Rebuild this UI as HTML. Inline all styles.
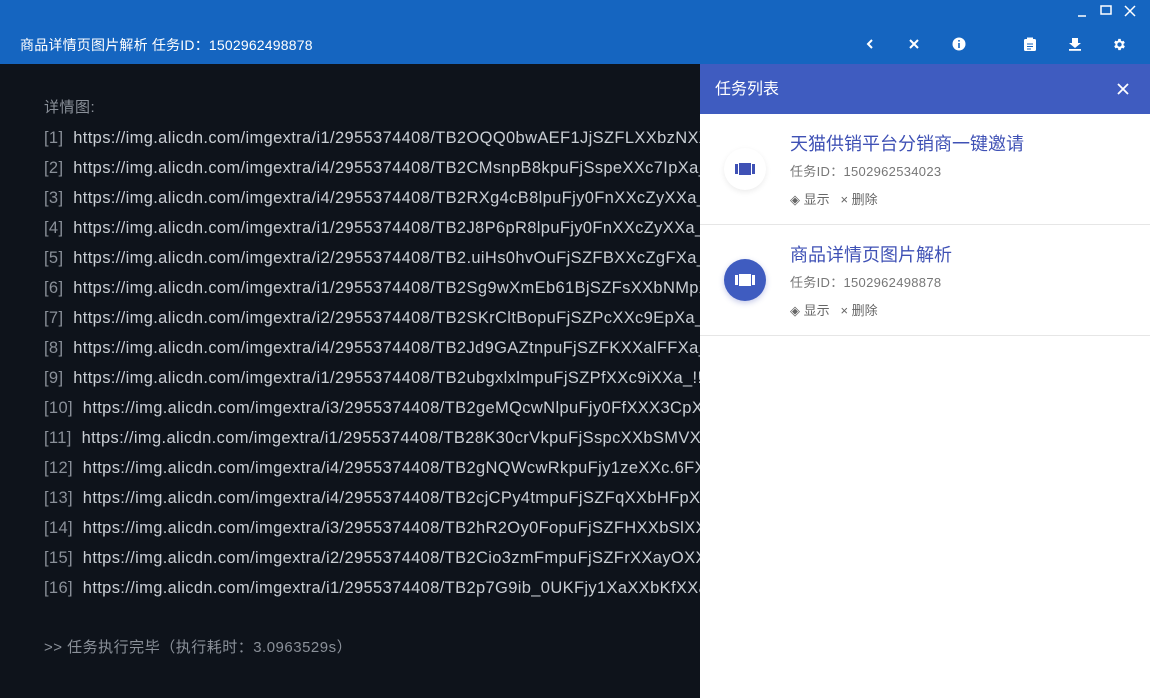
<!DOCTYPE html>
<html><head><meta charset="utf-8"><style>
*{margin:0;padding:0;box-sizing:border-box}
body{width:1150px;height:698px;overflow:hidden;background:#0e131b;font-family:"Liberation Sans","Noto Sans CJK SC",sans-serif;position:relative}
.top{position:absolute;left:0;top:0;width:1150px;height:64px;background:#1565c0}
.title{position:absolute;left:20px;top:35px;color:#fff;font-size:14px;letter-spacing:0.2px}
.ic{position:absolute;color:#fff}
.log{position:absolute;left:44px;top:98px;width:656px;overflow:hidden;white-space:nowrap;color:#c9ced4;font-size:16.5px;letter-spacing:0.35px}
.log div{height:30px;line-height:20px}
.log .n{color:#8a9099}
.log .h{color:#8a9099;font-size:15px;letter-spacing:0.5px}
.panel{position:absolute;left:700px;top:64px;width:450px;height:634px;background:#fff}
.ph{height:50px;background:#3f5cc0;color:#fff;font-size:16px;line-height:52px;padding-left:15px;position:relative}
.item{height:111px;border-bottom:1px solid #e6e6e6;position:relative}
.av{position:absolute;left:24px;top:34px;width:42px;height:42px;border-radius:50%}
.it{position:absolute;left:90px;top:16px;font-size:18px;color:#3f51b5}
.id{position:absolute;left:90px;top:47px;font-size:13px;color:#777;letter-spacing:0.3px}
.ac{position:absolute;left:90px;top:75px;font-size:13px;color:#666}
</style></head><body>
<div class="top">
<div class="title">商品详情页图片解析 任务ID：1502962498878</div>
<svg class="ic" style="left:1076px;top:6px" width="12" height="12"><path d="M2 10h8" stroke="#fff" stroke-width="1.5"/></svg>
<svg class="ic" style="left:1100px;top:5px" width="12" height="12"><rect x="1" y="1" width="10" height="8" fill="none" stroke="#fff" stroke-width="1.5"/></svg>
<svg class="ic" style="left:1124px;top:5px" width="12" height="12"><path d="M1 1l10 10M11 1L1 11" stroke="#fff" stroke-width="1.5"/></svg>
<svg class="ic" style="left:864px;top:38px" width="12" height="12"><path d="M8 2L4 6l4 4" stroke="#fff" stroke-width="2" fill="none"/></svg>
<svg class="ic" style="left:908px;top:38px" width="12" height="12"><path d="M2 2l8 8M10 2l-8 8" stroke="#fff" stroke-width="2"/></svg>
<svg class="ic" style="left:952px;top:37px" width="14" height="14"><circle cx="7" cy="7" r="6.5" fill="#fff"/><rect x="6.2" y="6" width="1.6" height="5" fill="#1565c0"/><rect x="6.2" y="3" width="1.6" height="1.6" fill="#1565c0"/></svg>
<svg class="ic" style="left:1023px;top:37px" width="14" height="15"><rect x="1" y="2" width="12" height="12" rx="1.5" fill="#fff"/><rect x="4" y="0.5" width="6" height="3" fill="#fff"/><path d="M4 7h6M4 9.5h6M4 12h4" stroke="#1565c0" stroke-width="1"/></svg>
<svg class="ic" style="left:1068px;top:37px" width="14" height="14"><path d="M4 1h6v5h3L7 11 1 6h3z" fill="#fff"/><rect x="1" y="12" width="12" height="1.8" fill="#fff"/></svg>
<svg class="ic" style="left:1112px;top:37px" width="15" height="15" viewBox="0 0 24 24"><path fill="#fff" d="M19.4 13a7.5 7.5 0 000-2l2.1-1.6-2-3.5-2.5 1a7 7 0 00-1.7-1L15 3h-4l-.4 2.7a7 7 0 00-1.7 1l-2.5-1-2 3.5L6.6 11a7.5 7.5 0 000 2l-2.1 1.6 2 3.5 2.5-1a7 7 0 001.7 1L11 21h4l.4-2.7a7 7 0 001.7-1l2.5 1 2-3.5zM13 15.5a3.5 3.5 0 110-7 3.5 3.5 0 010 7z" transform="translate(-1 0)"/></svg>
</div>
<div class="log">
<div class="h">详情图:</div>
<div><span class="n">[1]</span>&nbsp; https://img.alicdn.com/imgextra/i1/2955374408/TB2OQQ0bwAEF1JjSZFLXXbzNXXa_!!2955374408.jpg</div>
<div><span class="n">[2]</span>&nbsp; https://img.alicdn.com/imgextra/i4/2955374408/TB2CMsnpB8kpuFjSspeXXc7IpXa_!!2955374408.jpg</div>
<div><span class="n">[3]</span>&nbsp; https://img.alicdn.com/imgextra/i4/2955374408/TB2RXg4cB8lpuFjy0FnXXcZyXXa_!!2955374408.jpg</div>
<div><span class="n">[4]</span>&nbsp; https://img.alicdn.com/imgextra/i1/2955374408/TB2J8P6pR8lpuFjy0FnXXcZyXXa_!!2955374408.jpg</div>
<div><span class="n">[5]</span>&nbsp; https://img.alicdn.com/imgextra/i2/2955374408/TB2.uiHs0hvOuFjSZFBXXcZgFXa_!!2955374408.jpg</div>
<div><span class="n">[6]</span>&nbsp; https://img.alicdn.com/imgextra/i1/2955374408/TB2Sg9wXmEb61BjSZFsXXbNMpXa_!!2955374408.jpg</div>
<div><span class="n">[7]</span>&nbsp; https://img.alicdn.com/imgextra/i2/2955374408/TB2SKrCltBopuFjSZPcXXc9EpXa_!!2955374408.jpg</div>
<div><span class="n">[8]</span>&nbsp; https://img.alicdn.com/imgextra/i4/2955374408/TB2Jd9GAZtnpuFjSZFKXXalFFXa_!!2955374408.jpg</div>
<div><span class="n">[9]</span>&nbsp; https://img.alicdn.com/imgextra/i1/2955374408/TB2ubgxlxlmpuFjSZPfXXc9iXXa_!!2955374408.jpg</div>
<div><span class="n">[10]</span>&nbsp; https://img.alicdn.com/imgextra/i3/2955374408/TB2geMQcwNlpuFjy0FfXXX3CpXa_!!2955374408.jpg</div>
<div><span class="n">[11]</span>&nbsp; https://img.alicdn.com/imgextra/i1/2955374408/TB28K30crVkpuFjSspcXXbSMVXa_!!2955374408.jpg</div>
<div><span class="n">[12]</span>&nbsp; https://img.alicdn.com/imgextra/i4/2955374408/TB2gNQWcwRkpuFjy1zeXXc.6FXa_!!2955374408.jpg</div>
<div><span class="n">[13]</span>&nbsp; https://img.alicdn.com/imgextra/i4/2955374408/TB2cjCPy4tmpuFjSZFqXXbHFpXa_!!2955374408.jpg</div>
<div><span class="n">[14]</span>&nbsp; https://img.alicdn.com/imgextra/i3/2955374408/TB2hR2Oy0FopuFjSZFHXXbSlXXa_!!2955374408.jpg</div>
<div><span class="n">[15]</span>&nbsp; https://img.alicdn.com/imgextra/i2/2955374408/TB2Cio3zmFmpuFjSZFrXXayOXXa_!!2955374408.jpg</div>
<div><span class="n">[16]</span>&nbsp; https://img.alicdn.com/imgextra/i1/2955374408/TB2p7G9ib_0UKFjy1XaXXbKfXXa_!!2955374408.jpg</div>
<div></div>
<div class="h">&gt;&gt; 任务执行完毕（执行耗时：3.0963529s）</div>
</div>
<div class="panel">
<div class="ph">任务列表<svg style="position:absolute;left:417px;top:19px" width="12" height="12"><path d="M1 1l10 10M11 1L1 11" stroke="#fff" stroke-width="1.8"/></svg></div>
<div class="item">
<div class="av" style="background:#fff;box-shadow:0 2px 6px rgba(0,0,0,.08)"><svg width="42" height="42"><rect x="11" y="16" width="3" height="10" fill="#3f51b5"/><rect x="15" y="15" width="12" height="12" fill="#3f51b5"/><rect x="28" y="16" width="3" height="10" fill="#3f51b5"/></svg></div>
<div class="it">天猫供销平台分销商一键邀请</div>
<div class="id">任务ID：1502962534023</div>
<div class="ac">◈ 显示 &nbsp; × 删除</div>
</div>
<div class="item">
<div class="av" style="background:#3f5cc0;box-shadow:0 2px 6px rgba(63,81,181,.3)"><svg width="42" height="42"><rect x="11" y="16" width="3" height="10" fill="#fff"/><rect x="15" y="15" width="12" height="12" fill="#fff"/><rect x="28" y="16" width="3" height="10" fill="#fff"/></svg></div>
<div class="it">商品详情页图片解析</div>
<div class="id">任务ID：1502962498878</div>
<div class="ac">◈ 显示 &nbsp; × 删除</div>
</div>
</div>
</body></html>
